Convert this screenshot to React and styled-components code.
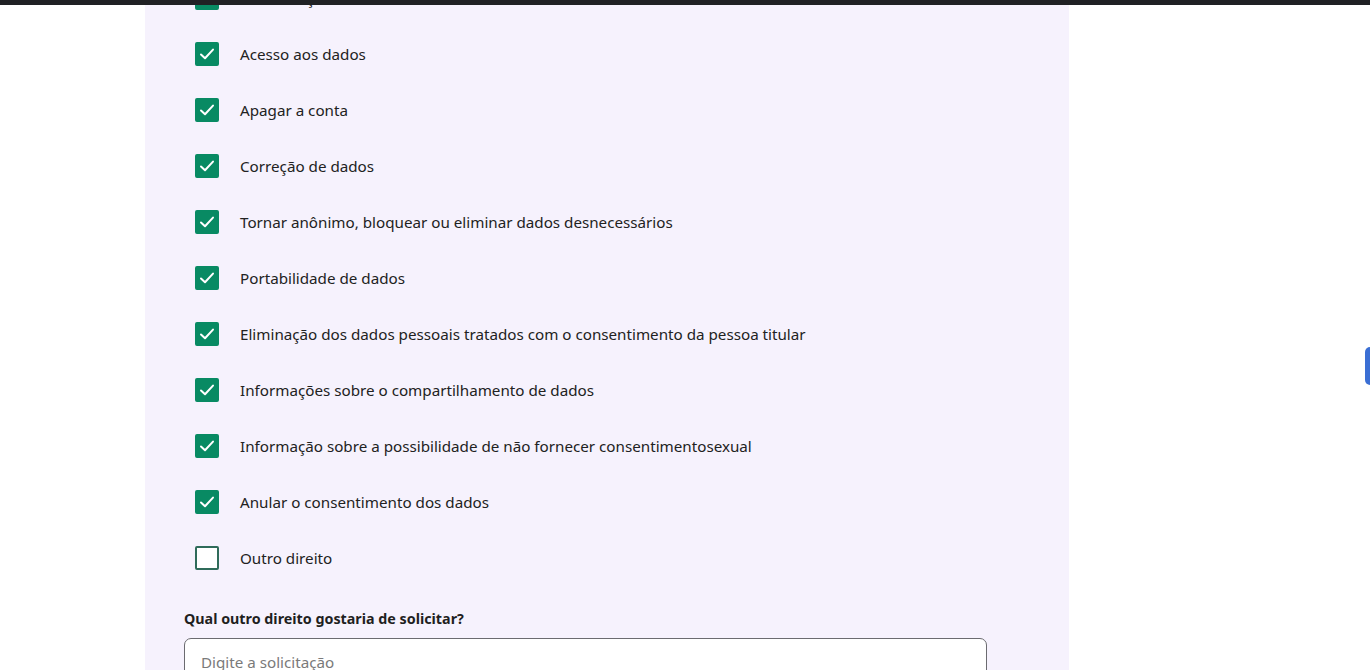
import React from "react";
import styled, { createGlobalStyle } from "styled-components";

const GlobalStyle = createGlobalStyle`
  html, body {
    margin: 0;
    padding: 0;
    background: #ffffff;
    overflow: hidden;
  }
  body {
    font-family: "Noto Sans", "Open Sans", sans-serif;
    color: #222222;
  }
`;

const TopBar = styled.div`
  position: fixed;
  top: 0;
  left: 0;
  right: 0;
  height: 5px;
  background: #202124;
  z-index: 10;
`;

const Page = styled.div`
  height: 670px;
  overflow: hidden;
`;

const Panel = styled.div`
  width: 924px;
  margin-left: 145px;
  background: #f6f2fd;
  padding: 0 0 40px 39px;
  box-sizing: border-box;
  margin-top: -30px;
`;

const List = styled.div`
  display: flex;
  flex-direction: column;
`;

const Row = styled.label`
  display: flex;
  align-items: center;
  gap: 21px;
  height: 56px;
  padding-left: 11px;
  font-size: 15.2px;
  color: #222222;
`;

const Box = styled.span`
  width: 24px;
  height: 24px;
  box-sizing: border-box;
  border-radius: 2px;
  border: 2px solid;
  background: ${(p) => (p.checked ? "#088a63" : "#ffffff")};
  border-color: ${(p) => (p.checked ? "#088a63" : "#2f6b5a")};
  display: flex;
  align-items: center;
  justify-content: center;
  flex-shrink: 0;
`;

const Field = styled.div`
  display: flex;
  flex-direction: column;
  gap: 10px;
  margin-top: 23px;
  width: 803px;
`;

const FieldLabel = styled.div`
  font-size: 14.3px;
  font-weight: 700;
  color: #1f1f1f;
`;

const Input = styled.input`
  height: 48px;
  box-sizing: border-box;
  border: 1px solid #6b6b70;
  border-radius: 7px;
  background: #ffffff;
  padding: 0 16px;
  font-family: inherit;
  font-size: 15.2px;
  color: #222;
  &::placeholder {
    color: #7a7a7a;
  }
`;

const SideTab = styled.div`
  position: fixed;
  right: 0;
  top: 347px;
  width: 5px;
  height: 38px;
  background: #3b6fd4;
  border-radius: 5px 0 0 5px;
`;

const Check = () => (
  <svg width="20" height="20" viewBox="0 0 20 20">
    <path
      d="M4 10.5 L8 14.2 L16 5.6"
      fill="none"
      stroke="#ffffff"
      strokeWidth="2"
      strokeLinecap="round"
      strokeLinejoin="round"
    />
  </svg>
);

const items = [
  { text: "Confirmação da existência de tratamento", checked: true },
  { text: "Acesso aos dados", checked: true },
  { text: "Apagar a conta", checked: true },
  { text: "Correção de dados", checked: true },
  { text: "Tornar anônimo, bloquear ou eliminar dados desnecessários", checked: true },
  { text: "Portabilidade de dados", checked: true },
  {
    text: "Eliminação dos dados pessoais tratados com o consentimento da pessoa titular",
    checked: true,
  },
  { text: "Informações sobre o compartilhamento de dados", checked: true },
  {
    text: "Informação sobre a possibilidade de não fornecer consentimentosexual",
    checked: true,
  },
  { text: "Anular o consentimento dos dados", checked: true },
  { text: "Outro direito", checked: false },
];

const App = () => {
  return (
    <Page>
      <GlobalStyle />
      <TopBar />
      <Panel>
        <List>
          {items.map((item) => (
            <Row key={item.text}>
              <Box checked={item.checked}>{item.checked && <Check />}</Box>
              {item.text}
            </Row>
          ))}
        </List>
        <Field>
          <FieldLabel>Qual outro direito gostaria de solicitar?</FieldLabel>
          <Input placeholder="Digite a solicitação" />
        </Field>
      </Panel>
      <SideTab />
    </Page>
  );
};

export default App;
